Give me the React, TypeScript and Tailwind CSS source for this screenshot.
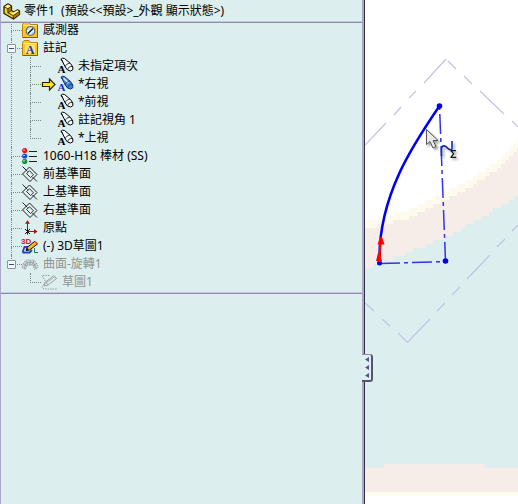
import type { ReactNode } from "react";

const serif = '"Liberation Serif", serif';
const sans = '"Liberation Sans", sans-serif';

function Icon({ children }: { children: ReactNode }) {
  return (
    <svg viewBox="0 0 16 16" className="h-4 w-4 shrink-0 overflow-visible" fill="none" aria-hidden="true">
      {children}
    </svg>
  );
}

function PartIcon() {
  return (
    <Icon>
      <path d="M1 3.500 5 .8 8.500 3v4.500l2.500 1.500 3.500-2.200 2 1.200v3.500L10.500 16 1 10.500Z" fill="#f2cf1d" stroke="#2a2200" strokeWidth="1.300" strokeLinejoin="round" />
      <path d="M1.800 3.700 5 1.600 7.800 3.300 4.600 5.400Z" fill="#fff38a" />
      <path d="M7.600 11 14.300 7.300 16 8.300 10.200 12Z" fill="#fff38a" />
      <path d="M5 5.800 8 3.800V8L5 10ZM10.300 12.500l6-3.800v2.600l-6 3.900Z" fill="#a87c04" />
      <path d="M1 3.700l3.800 2.100v4L10.300 12.700V16M4.800 5.800 8.400 3.400M10.300 12.500l6-4M5 9.800l3.500-2.300" stroke="#332900" strokeWidth=".9" />
    </Icon>
  );
}

function Folder() {
  return (
    <>
      <path d="M.5 2.500 2 .5h5L8.500 2.500h7v13H.5Z" fill="#f9c81c" stroke="#c07f14" />
      <path d="M1.500 3.500h13" stroke="#fff2a6" />
      <path d="M15.500 3v12.500H1" stroke="#8a5310" />
    </>
  );
}

function SensorIcon() {
  return (
    <Icon>
      <Folder />
      <circle cx="8.500" cy="9" r="4.300" fill="#e8f4fa" stroke="#5a7086" strokeWidth="1.300" />
      <path d="M6 11.500 11 6.500" stroke="#111" strokeWidth="1.400" />
      <path d="M6 7.500l1-1M10 11.500l1-1" stroke="#3b62b8" />
    </Icon>
  );
}

function NotesFolderIcon() {
  return (
    <Icon>
      <Folder />
      <path d="M3 4.500h10v9.500H3Z" fill="#ffe476" />
      <text x="8" y="13.500" textAnchor="middle" fontFamily={serif} fontWeight="700" fontSize="12" fill="#1735b5">A</text>
    </Icon>
  );
}

function ViewIcon({ active }: { active?: boolean }) {
  const ink = active ? "#12306e" : "#000";
  return (
    <Icon>
      <path d="M4.200 1 5.500.2 7.500.5 13.500 5.500 15.800 9v2.800L13.500 13 10.500 12 8.300 9Z" fill={active ? "#3f7fdc" : "#f4fafa"} stroke={ink} strokeLinejoin="round" />
      {active && <path d="M6.500 2.200 11.500 7" stroke="#cfe6ff" strokeWidth="1.800" />}
      <path d="M8.300 8.800C8.500 7 10.500 5.300 12.800 5.300M11 11.500c0-2 1.800-3.300 4-3" stroke={ink} strokeWidth=".8" />
      <path d="M4 1.200 6 4.200" stroke={ink} />
      <text x="4.500" y="15" textAnchor="middle" fontFamily={serif} fontWeight="700" fontSize="11" fill={active ? "#1231c4" : "#000"}>A</text>
    </Icon>
  );
}

function ArrowIcon() {
  return (
    <Icon>
      <path d="M1.500 6.500h7v-3.500L14 8.500 8.500 14v-3.500h-7Z" fill="#ffec00" stroke="#2b2600" strokeWidth="1.200" />
    </Icon>
  );
}

function MaterialIcon() {
  return (
    <Icon>
      <circle cx="2.700" cy="2.600" r="2.600" fill="#e01818" />
      <circle cx="2.700" cy="8" r="2.600" fill="#1748e0" />
      <circle cx="2.700" cy="13.400" r="2.600" fill="#129a32" />
      <path d="M1.300 2h1.400M1.300 7.400h1.400M1.300 12.800h1.400" stroke="#fff" />
      <path d="M7 3.500h8M7 8.500h8M7 13.500h8" stroke="#222" />
    </Icon>
  );
}

function PlaneIcon() {
  return (
    <Icon>
      <path d="M.5 8 7.500 1 15 8.500 8 15.500Z" stroke="#222" />
      <path d="M.5.500 5.500 5.500M10.500 11l4.500 4.500" stroke="#222" />
      <path d="M4.500 7.500 7.500 4.800 11.500 8.800 8.500 11.500Z" stroke="#222" strokeWidth=".9" />
    </Icon>
  );
}

function OriginIcon() {
  return (
    <Icon>
      <path d="M5.500 11V2M6 11.500h8" stroke="#a01414" />
      <path d="M5.500.2 8 3.800H3ZM15.500 11.500 12 14V9Z" fill="#a01414" />
      <path d="M3 9l5 5M8 9l-5 5M5.500 8.500v6" stroke="#111" />
    </Icon>
  );
}

function Sketch3DIcon() {
  return (
    <Icon>
      <path d="M.5 14.500 2.500 9h6M.5 14.500h7L10 12" stroke="#1d42cc" strokeWidth="1.800" />
      <path d="M4 12.500 5 9.500 12.500 3.500l3 2.500L7.500 12Z" fill="#ffb81e" stroke="#111" />
      <path d="M4 12.500 5 9.800l2 1.800Z" fill="#111" />
      <path d="M13 3.800l2.300 1.900" stroke="#d35c12" strokeWidth="1.500" />
      <path d="M12.500 10v4.500H16" stroke="#138348" />
      <text x="-1" y="5.500" fontFamily={sans} fontSize="8" fontWeight="700" fill="#c81818">3D</text>
    </Icon>
  );
}

function SurfaceIcon() {
  return (
    <Icon>
      <path d="M0 11.500C1.500 6 4 2.500 8 4.500c4-2 6.500 1.500 8 7l-3.500 2C11.500 9.500 10 8 8 9.500 6 8 4.500 9.500 3.500 13.500Z" fill="#cdd6d6" stroke="#8f9696" strokeDasharray="1 1" />
      <path d="M2 12.500C4 6 6 5.500 8 7c2-1.500 4-1 6 5.500M8 4.500v5M4 5l2 4M12 5l-2 4M2 8l3 2M14 8l-3 2" stroke="#8f9696" strokeWidth=".8" />
    </Icon>
  );
}

function SketchIcon() {
  return (
    <Icon>
      <path d="M8.500 1.500H1l3.500 6L1 13.500l2 1.500h13" stroke="#9a9f9f" strokeDasharray="1.500 1" />
      <path d="M3 12l1.500-4L13 1.500l2.500 3L7 11Z" stroke="#9a9f9f" />
      <path d="M5 9l9-6.500M4.500 8l2.500 3" stroke="#9a9f9f" strokeWidth=".8" />
    </Icon>
  );
}

/* Dotted connector: the upper half turns right towards the icon. */
function Branch({ last }: { last?: boolean }) {
  return (
    <span className="flex h-full w-[11px] shrink-0 flex-col">
      <span className="h-[10px] border-b border-l border-dotted border-[#7d8888]" />
      {!last && <span className="h-2 border-l border-dotted border-[#7d8888]" />}
    </span>
  );
}

type Node = {
  label: string;
  icon: ReactNode;
  muted?: boolean;
  marked?: boolean;
  slot?: boolean;
  children?: Node[];
};

const tree: Node[] = [
  { label: "感測器", icon: <SensorIcon /> },
  {
    label: "註記",
    icon: <NotesFolderIcon />,
    children: [
      { label: "未指定項次", icon: <ViewIcon />, slot: true },
      { label: "*右視", icon: <ViewIcon active />, slot: true, marked: true },
      { label: "*前視", icon: <ViewIcon />, slot: true },
      { label: "註記視角 1", icon: <ViewIcon />, slot: true },
      { label: "*上視", icon: <ViewIcon />, slot: true },
    ],
  },
  { label: "1060-H18 棒材 (SS)", icon: <MaterialIcon /> },
  { label: "前基準面", icon: <PlaneIcon /> },
  { label: "上基準面", icon: <PlaneIcon /> },
  { label: "右基準面", icon: <PlaneIcon /> },
  { label: "原點", icon: <OriginIcon /> },
  { label: "(-) 3D草圖1", icon: <Sketch3DIcon /> },
  {
    label: "曲面-旋轉1",
    icon: <SurfaceIcon />,
    muted: true,
    children: [{ label: "草圖1", icon: <SketchIcon />, muted: true }],
  },
];

function Row({ node, last }: { node: Node; last: boolean }) {
  return (
    <div className="relative flex h-[18px] items-center">
      <Branch last={last} />
      {node.children && (
        <button
          type="button"
          aria-label={"收合 " + node.label}
          className="absolute top-[5px] -left-1 flex h-[9px] w-[9px] items-center justify-center rounded-[1px] border border-[#8b979b] bg-[#f3f8f8]"
        >
          <span className="h-px w-[5px] bg-[#2a49a8]" />
        </button>
      )}
      {node.slot && <span className="w-4 shrink-0">{node.marked && <ArrowIcon />}</span>}
      {node.icon}
      <span className={node.muted ? "pl-[5px] whitespace-nowrap text-[#8e9494]" : "pl-[5px] whitespace-nowrap"}>
        {node.label}
      </span>
    </div>
  );
}

function Tree({ nodes }: { nodes: Node[] }) {
  return (
    <ul>
      {nodes.map((node, i) => {
        const last = i === nodes.length - 1;
        return (
          <li key={node.label}>
            <Row node={node} last={last} />
            {node.children && (
              <div className={last ? "border-l border-transparent pl-[18px]" : "border-l border-dotted border-[#7d8888] pl-[18px]"}>
                <Tree nodes={node.children} />
              </div>
            )}
          </li>
        );
      })}
    </ul>
  );
}

/* Builds a 4px stair-stepped area below a line of points. */
function stairs(points: number[][], drop: number) {
  let d = "M365 504";
  for (let x = 365; x < 700; x += 4) {
    let k = 0;
    while (k < points.length - 2 && points[k + 1][0] <= x) k++;
    const [x0, y0] = points[k];
    const [x1, y1] = points[k + 1];
    const y = Math.round((y0 + ((x - x0) * (y1 - y0)) / (x1 - x0) + drop) / 4) * 4;
    d += `L${x} ${y}H${x + 4}`;
  }
  return d + "V504Z";
}

const upperEdge = [[365, 220], [403, 211], [427, 200], [458, 185], [478, 173], [498, 160], [518, 141]];
const lowerEdge = [[365, 268], [417, 248], [453, 233], [480, 217], [500, 205], [518, 195]];

function Viewport() {
  return (
    <svg
      viewBox="365 0 153 504"
      preserveAspectRatio="xMinYMin slice"
      className="block h-full w-full"
      fill="none"
      role="img"
      aria-label="3D草圖"
    >
      <g shapeRendering="crispEdges">
        <path d={stairs(upperEdge, 0)} fill="#fffaee" />
        <path d={stairs(upperEdge, 8)} fill="#f6ede8" />
        <path d={stairs(lowerEdge, 0)} fill="#dceeed" />
        <path d="M365 468h19v-4h100v4h216v24H365Z" fill="#f6ede8" />
        <path d="M365 492h335v4H365Z" fill="#fffaee" />
        <path d="M365 496h335v8H365Z" fill="#fff" />
      </g>
      <path
        d="M365 145 386 123M394 115l7-8M409 98l7-7M424 83l22-24M448 61l8 8M464 76l8 8M480 91l24 23M512 121l6 6M365 303l9 8M382 319l8 7M398 333l9.500 9.500L430 319M437 311l8-8M452 295l8-8M467 279l23-24M497 247l8-8M512 231l6-6"
        stroke="#c0c4e8"
        strokeWidth="1.200"
      />
      <path d="M439.500 106 445.500 261" stroke="#3434e6" strokeWidth="1.500" strokeDasharray="20 4 4 4" strokeDashoffset="24" />
      <path d="M380 263.500 445.500 261.500" stroke="#3434e6" strokeWidth="1.500" strokeDasharray="20 4 4 4" />
      <path d="M439.500 106C415 142 378 195 379.500 262" stroke="#0000f0" strokeWidth="2.500" />
      <circle cx="439.500" cy="106" r="2.800" fill="#0000f0" />
      <circle cx="445.500" cy="261" r="2.800" fill="#0000e0" />
      <circle cx="379.500" cy="263" r="2.500" fill="#0000e0" />
      <path d="M380.500 240 379.500 262" stroke="#f00" strokeWidth="2.200" />
      <path d="M380 237h2l2.500 7.500h-7ZM378 253h1.500l2.500 8h-6Z" fill="#f00" />
      <g style={{ filter: "drop-shadow(2px 2px 1px rgb(0 0 0 / 0.35))" }}>
        <path d="M426.500 129.500v15l3.500-3 3 6.500 3-1.500-3-6h5Z" fill="#e9ece4" stroke="#555" />
        <path d="M441.500 156v-7c0-4 4-4 6-1 1.500 2 3 2 5 1.500M452 141v8" stroke="#152fa8" strokeWidth="1.600" />
        <text x="450" y="158" fontFamily={sans} fontWeight="700" fontSize="11" fill="#141414">Σ</text>
      </g>
    </svg>
  );
}

export default function App() {
  return (
    <div className="flex h-screen overflow-hidden bg-white font-['Noto_Sans','Noto_Sans_CJK_TC',sans-serif] text-xs leading-[18px] text-black">
      <aside className="relative flex w-[365px] shrink-0 flex-col border-r border-l border-r-[#2f3045] border-l-[#aaa9cd] bg-[#dceeed]">
        <div className="flex min-h-0 flex-1 flex-col border-r-2 border-[#a9a9c4]">
          <header className="flex h-[22px] shrink-0 items-center border-b border-[#c6c6ea] pl-[2px]">
            <PartIcon />
            <h1 className="pl-[5px] whitespace-pre">{"零件1  (預設<<預設>_外觀 顯示狀態>)"}</h1>
          </header>
          <nav aria-label="特徵樹" className="overflow-hidden border-t border-b border-t-[#8d8d9f] border-b-[#c6c6ea] pb-px pl-[10px]">
            <div className="-mt-[2px]">
              <Tree nodes={tree} />
            </div>
          </nav>
          <div className="flex-1 border-t border-[#8d8d9f]" />
        </div>
        <button
          type="button"
          aria-label="收合面板"
          className="absolute top-[354px] -right-[9px] flex h-7 w-[11px] items-center justify-center rounded-r-[3px] border-t border-r-2 border-b-2 border-t-[#8d8d9f] border-r-[#55556c] border-b-[#55556c] bg-[#e0f0f1]"
        >
          <svg viewBox="0 0 4 21" className="h-[21px] w-1" fill="#4a56a4" aria-hidden="true">
            <path d="M0 2.500 4 0v5ZM0 10.500 4 8v5ZM0 18.500 4 16v5Z" />
          </svg>
        </button>
      </aside>
      <main className="min-w-0 flex-1">
        <Viewport />
      </main>
    </div>
  );
}
